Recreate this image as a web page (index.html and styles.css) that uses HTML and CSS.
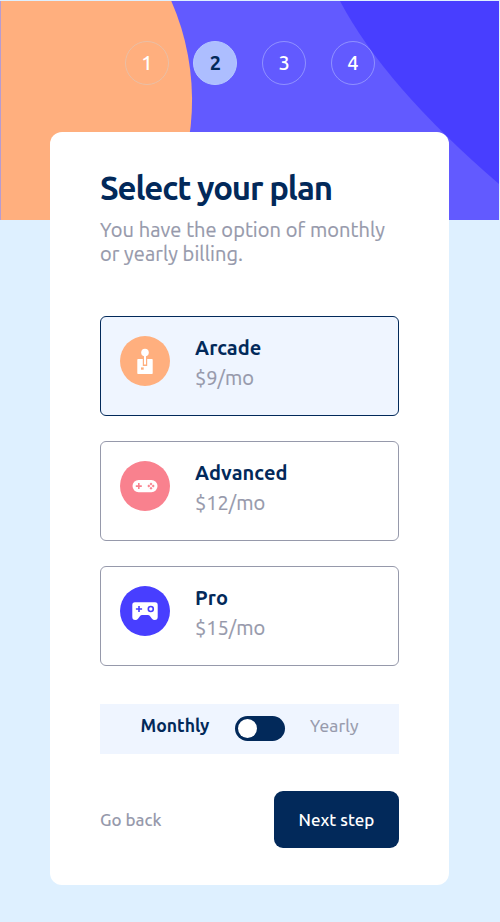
FILE: index.html
```html
<!DOCTYPE html>
<html lang="en">
<head>
<meta charset="utf-8">
<meta name="viewport" content="width=device-width, initial-scale=1">
<title>Select your plan</title>
<link rel="stylesheet" href="styles.css">
</head>
<body>
<div class="page">
  <svg class="backdrop" width="500" height="220" viewBox="0 0 500 220" aria-hidden="true">
    <path fill="#b79bd0" d="M0 1h1v219H0z"/>
    <path fill="#625aff" d="M1 1h498v219H1z"/>
    <path fill="#ffaf7e" d="M1 1h170.3A247 247 0 0 1 161 220H1z"/>
    <path fill="#483eff" d="M340 1Q384.500 85.500 499 184V1z"/>
  </svg>
  <ol class="steps">
    <li class="step">1</li>
    <li class="step active">2</li>
    <li class="step">3</li>
    <li class="step">4</li>
  </ol>
  <main class="card">
    <h1 class="title">Select your plan</h1>
    <p class="intro">You have the option of monthly<br>or yearly billing.</p>
    <div class="plans">
      <div class="plan selected">
        <svg class="icon" width="50" height="50" viewBox="0 0 50 50">
          <circle cx="25" cy="25" r="25" fill="#ffaf7e"/>
          <circle cx="25" cy="16.600" r="3.800" fill="#fff"/>
          <path fill="#fff" d="M24 19h2v9.500h-2zM18 23h4.800v7h4.400v-7H32q.7 0 .7.700v13.500q0 .7-.7.700H18q-.7 0-.7-.7V23.700q0-.7.700-.7z"/>
          <path fill="#ffaf7e" d="M21 31.400h2.700v2.300H21z"/>
        </svg>
        <div><h2 class="name">Arcade</h2><p class="price">$9/mo</p></div>
      </div>
      <div class="plan">
        <svg class="icon" width="50" height="50" viewBox="0 0 50 50">
          <circle cx="25" cy="25" r="25" fill="#f9818e"/>
          <rect x="12.500" y="19" width="25" height="12.200" rx="6.100" fill="#fff"/>
          <path fill="#f9818e" d="M18 22.100h1.600v2.200h2.200v1.600h-2.200v2.200H18v-2.200h-2.200v-1.600H18zM31 21.400l1.500 1.500-1.500 1.500-1.500-1.500zM31 25.800l1.500 1.500-1.500 1.500-1.500-1.500zM28.800 23.600l1.500 1.500-1.500 1.500-1.500-1.500zM33.200 23.600l1.500 1.500-1.500 1.500-1.500-1.500z"/>
        </svg>
        <div><h2 class="name">Advanced</h2><p class="price">$12/mo</p></div>
      </div>
      <div class="plan">
        <svg class="icon" width="50" height="50" viewBox="0 0 50 50">
          <circle cx="25" cy="25" r="25" fill="#483eff"/>
          <path fill="#fff" d="M15 16.300h20q2.700 0 2.700 2.700v12q0 3-2.900 3-1.900 0-3-1.500l-1.700-2.300q-.8-1.100-2.300-1.100h-5.600q-1.500 0-2.300 1.100l-1.700 2.300q-1.100 1.500-3 1.500-2.900 0-2.900-3V19q0-2.700 2.700-2.700z"/>
          <path fill="#483eff" d="M18.200 19.900h1.600v2.300h2.300v1.600h-2.300v2.300h-1.600v-2.300h-2.300v-1.600h2.300z"/>
          <circle cx="30.800" cy="23" r="2.500" fill="none" stroke="#483eff" stroke-width="1.600"/>
        </svg>
        <div><h2 class="name">Pro</h2><p class="price">$15/mo</p></div>
      </div>
    </div>
    <div class="billing">
      <span class="monthly">Monthly</span>
      <span class="toggle"><span class="knob"></span></span>
      <span class="yearly">Yearly</span>
    </div>
    <div class="actions">
      <a class="back">Go back</a>
      <button class="next" type="button">Next step</button>
    </div>
  </main>
</div>
</body>
</html>
```
FILE: styles.css
```css
* { box-sizing: border-box; margin: 0; padding: 0; }

body {
  background: #def0ff;
  color: #02295a;
  font-family: Ubuntu, "Noto Sans", sans-serif;
  font-size: 20px;
}

.page { position: relative; height: 922px; padding-top: 41px; overflow: hidden; }
.backdrop { position: absolute; top: 0; left: 0; z-index: -1; }

.steps { display: flex; gap: 24.700px; margin-left: 124.800px; list-style: none; }
.step {
  display: flex;
  align-items: center;
  justify-content: center;
  width: 44px;
  height: 44px;
  padding-bottom: 2px;
  flex: none;
  border: 1px solid rgba(190, 200, 255, .5);
  border-radius: 50%;
  color: #fff;
  font-weight: 500;
}
.step:first-child { border-color: #e9bfa6; }
.step.active { background: #adbeff; border-color: #b6c8ff; color: #02295a; font-weight: 700; }

.card {
  width: 399px;
  height: 753px;
  margin: 47px 0 0 50px;
  padding: 35px 50px 0;
  background: #fff;
  border-radius: 12px;
}
.title { font-size: 33px; line-height: 42px; letter-spacing: -1.130px; white-space: nowrap; }
.intro { margin-top: 9px; line-height: 24px; letter-spacing: .08px; color: #9699ab; white-space: nowrap; }
.intro, .price, .yearly { -webkit-text-stroke: .2px #9699ab; }

.plans { display: grid; gap: 25px; margin-top: 50px; }
.plan {
  display: flex;
  gap: 25px;
  height: 100px;
  padding: 19px;
  border: 1px solid #9699ab;
  border-radius: 6px;
}
.plan.selected { background: #eff5ff; border-color: #02295a; }
.icon { flex: none; }
.name { font-size: 20px; line-height: 24px; letter-spacing: .08px; }
.price { margin-top: 6px; line-height: 24px; color: #9699ab; }

.billing {
  display: flex;
  align-items: center;
  height: 50px;
  margin-top: 38px;
  padding-left: 40.500px;
  background: #eff5ff;
  font-size: 17.600px;
  line-height: 24px;
}
.monthly { width: 94.500px; margin-bottom: 6px; font-weight: 700; }
.toggle { width: 50px; height: 25px; margin-bottom: 1px; padding: 3px; border-radius: 13px; background: #02295a; }
.knob { display: block; width: 19px; height: 19px; border-radius: 50%; background: #fff; }
.yearly { margin: 0 0 6px 25px; letter-spacing: .1px; color: #9699ab; }

.actions { display: flex; align-items: center; justify-content: space-between; margin-top: 37px; }
.back { color: #9699ab; font-size: 17px; font-weight: 500; }
.next {
  width: 125px;
  height: 57px;
  border: 0;
  border-radius: 9px;
  background: #02295a;
  color: #fff;
  font: 500 17px Ubuntu, "Noto Sans", sans-serif;
}
```
